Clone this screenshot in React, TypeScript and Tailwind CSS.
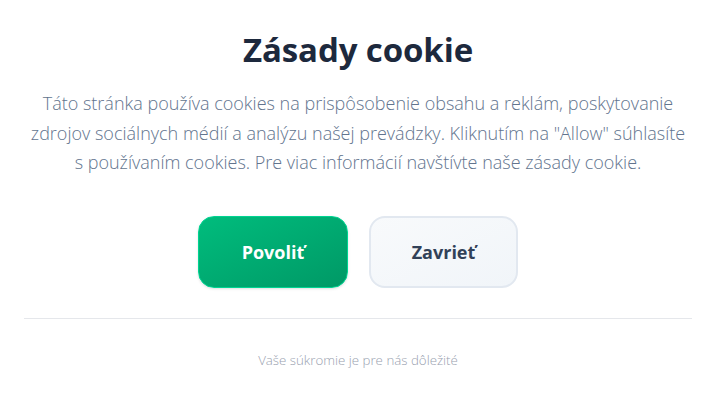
export default function App() {
  return (
    <div className="w-[715px] h-[403px] bg-white font-['Open_Sans','Noto_Sans',sans-serif]">
      <div className="pl-6 pr-[23px] pt-[28px] flex flex-col items-center">
        <h1 className="text-[33px] leading-[44px] font-bold text-slate-800 tracking-[-0.1px]">
          Zásady cookie
        </h1>
        <p className="mt-[17px] max-w-[668px] text-center text-[18px] leading-[29.7px] font-light text-slate-500">
          Táto stránka používa cookies na prispôsobenie obsahu a reklám, poskytovanie zdrojov
          sociálnych médií a analýzu našej prevádzky. Kliknutím na "Allow" súhlasíte{" "}
          s&nbsp;používaním cookies. Pre viac informácií navštívte naše zásady cookie.
        </p>
        <div className="mt-[38px] flex gap-[21px]">
          <button className="w-[150px] h-[72px] rounded-2xl border border-emerald-400 bg-gradient-to-br from-emerald-500 to-emerald-600 text-white text-[18px] font-bold shadow-sm">
            Povoliť
          </button>
          <button className="w-[149px] h-[72px] rounded-2xl border-2 border-slate-200 bg-gradient-to-br from-slate-50 to-slate-100 text-slate-700 text-[18px] font-bold">
            Zavrieť
          </button>
        </div>
        <div className="mt-[30px] w-full border-t border-gray-200" />
        <p className="mt-[31px] text-[13.3px] leading-[20px] font-light text-gray-400">
          Vaše súkromie je pre nás dôležité
        </p>
      </div>
    </div>
  );
}
